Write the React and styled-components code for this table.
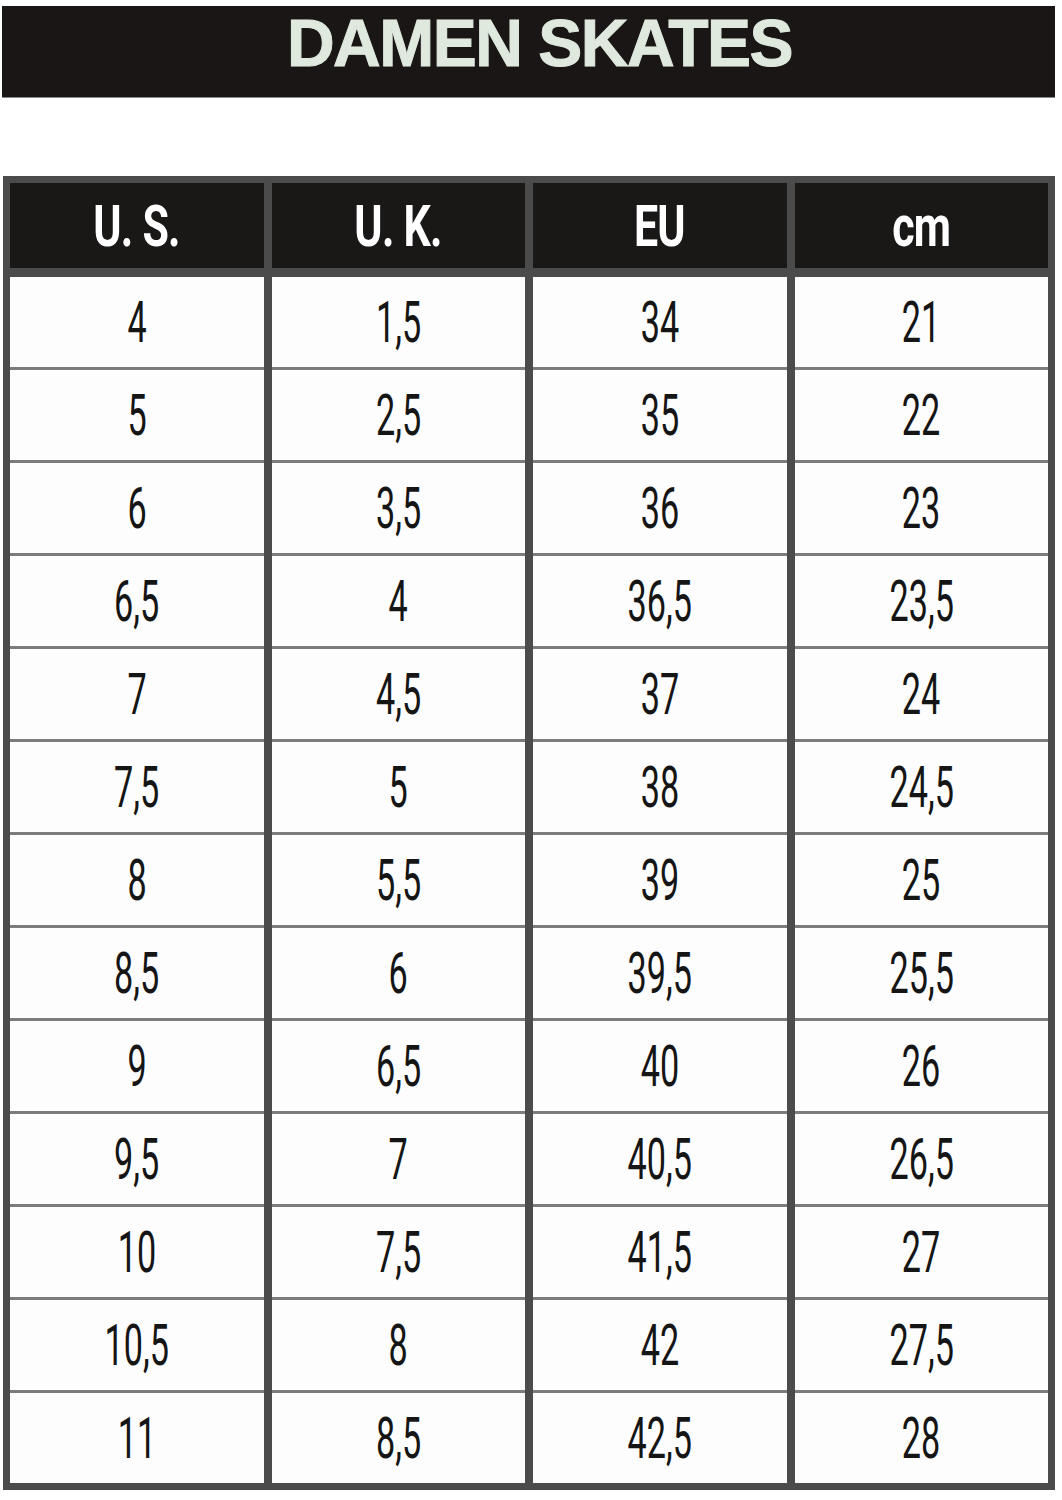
import React from "react";
import styled, { createGlobalStyle } from "styled-components";

const Global = createGlobalStyle`
  html, body { margin: 0; padding: 0; background: #ffffff; }
  body { font-family: "Liberation Sans", Arial, sans-serif; }
`;

const Page = styled.div`
  width: 1062px;
  padding: 6px 7px 10px 2px;
  box-sizing: border-box;
  display: flex;
  flex-direction: column;
`;

const TitleBar = styled.div`
  height: 91px;
  box-sizing: border-box;
  background: #1b1616;
  display: flex;
  align-items: center;
  justify-content: center;
  padding: 0 0 18px 22px;
  box-shadow: 0 1px 0 #8a8a8a;
`;

const Title = styled.h1`
  margin: 0;
  font-family: "Liberation Sans", Arial, sans-serif;
  font-weight: 700;
  font-size: 66px;
  letter-spacing: -1.5px;
  color: #dfe9de;
  -webkit-text-stroke: 1px #dfe9de;
  line-height: 1;
`;

const Table = styled.div`
  margin: 79px 0 0 1px;
  border: 7px solid #4b4b4b;
  background: #4b4b4b;
  display: flex;
  flex-direction: column;
  gap: 9px;
`;

const Row = styled.div`
  display: grid;
  grid-template-columns: repeat(4, 1fr);
  column-gap: 8px;
  background: #4b4b4b;
`;

const Body = styled.div`
  display: flex;
  flex-direction: column;
`;

const HeadCell = styled.div`
  height: 85px;
  background: #1a1717;
  display: flex;
  align-items: center;
  justify-content: center;
`;

const Cell = styled.div`
  height: 90px;
  background: #fdfdfd;
  border-top: ${(p) => (p.$first ? "0" : "3px solid #7c7c7c")};
  display: flex;
  align-items: center;
  justify-content: center;
`;

const Narrow = styled.span`
  display: inline-block;
  font-family: Roboto, "Liberation Sans", sans-serif;
  font-size: ${(p) => (p.$head ? "58px" : "57px")};
  font-weight: ${(p) => (p.$head ? 700 : 400)};
  color: ${(p) => (p.$head ? "#ffffff" : "#151515")};
  transform: scaleX(${(p) => (p.$head ? 0.74 : 0.6)});
  letter-spacing: ${(p) => (p.$head ? "-1px" : "0")};
  line-height: 1;
  white-space: nowrap;
`;

const headers = ["U. S.", "U. K.", "EU", "cm"];
const rows = [
  ["4", "1,5", "34", "21"],
  ["5", "2,5", "35", "22"],
  ["6", "3,5", "36", "23"],
  ["6,5", "4", "36,5", "23,5"],
  ["7", "4,5", "37", "24"],
  ["7,5", "5", "38", "24,5"],
  ["8", "5,5", "39", "25"],
  ["8,5", "6", "39,5", "25,5"],
  ["9", "6,5", "40", "26"],
  ["9,5", "7", "40,5", "26,5"],
  ["10", "7,5", "41,5", "27"],
  ["10,5", "8", "42", "27,5"],
  ["11", "8,5", "42,5", "28"],
];

export default function App() {
  return (
    <>
      <Global />
      <Page>
        <TitleBar>
          <Title>DAMEN SKATES</Title>
        </TitleBar>
        <Table>
          <Row>
            {headers.map((h) => (
              <HeadCell key={h}>
                <Narrow $head>{h}</Narrow>
              </HeadCell>
            ))}
          </Row>
          <Body>
            {rows.map((r, i) => (
              <Row key={i}>
                {r.map((v, j) => (
                  <Cell key={j} $first={i === 0}>
                    <Narrow>{v}</Narrow>
                  </Cell>
                ))}
              </Row>
            ))}
          </Body>
        </Table>
      </Page>
    </>
  );
}
